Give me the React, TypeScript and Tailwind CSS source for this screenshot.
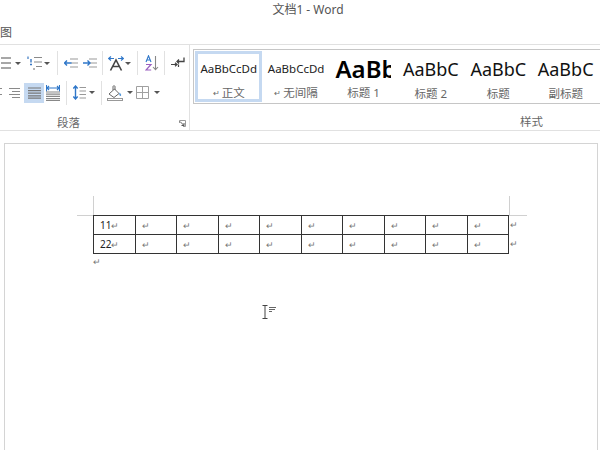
const FONT = "font-['Noto_Sans','Noto_Sans_CJK_SC',sans-serif]";

function Caret() {
  return <div className="w-0 h-0 border-x-[3px] border-x-transparent border-t-[3px] border-t-[#555]" />;
}

function Sep() {
  return <div className="w-px h-[24px] bg-[#e1e1e1]" />;
}

function Lines({ w = 14 }: { w?: number }) {
  return (
    <svg width={w} height="12" viewBox={`0 0 ${w} 12`}>
      <path d={`M0 1.5H${w}M3 4.5H${w}M0 7.5H${w}M3 10.5H${w}`} stroke="#8a8a8a" strokeWidth="1.1" />
    </svg>
  );
}

function ListIcon() {
  return (
    <svg width="14" height="14" viewBox="0 0 14 14">
      <path d="M2 2H12M2 7H12M2 12H12" stroke="#8a8a8a" strokeWidth="1.3" />
    </svg>
  );
}

function MultiList() {
  return (
    <svg width="15" height="14" viewBox="0 0 15 14">
      <path d="M1 0.5V3" stroke="#3a78c2" strokeWidth="1.2" />
      <path d="M4 3V6.5M3 8.5H5" stroke="#3a78c2" strokeWidth="1.4" />
      <path d="M7 1.5H15M7 6H15M9 10.5H15" stroke="#8a8a8a" strokeWidth="1.1" />
      <path d="M7 12V14" stroke="#6a6a6a" strokeWidth="1" />
    </svg>
  );
}

function IndentIcon({ flip = false }: { flip?: boolean }) {
  return (
    <svg width="14" height="10" viewBox="0 0 14 10">
      <path d="M6 1H14M7 5H14M6 9H14" stroke="#999" strokeWidth="1.2" />
      {flip ? (
        <path d="M0 5H7M4.5 2.5L7 5L4.5 7.5" stroke="#2f77c9" strokeWidth="1.4" fill="none" />
      ) : (
        <path d="M0.5 5H7.5M3 2.5L0.5 5L3 7.5" stroke="#2f77c9" strokeWidth="1.4" fill="none" />
      )}
    </svg>
  );
}

function SpacingIcon() {
  return (
    <svg width="16" height="15" viewBox="0 0 16 15">
      <path d="M0.5 2.5H6M3 0.5L0.5 2.5L3 4.5M15.5 2.5H10M13 0.5L15.5 2.5L13 4.5" stroke="#2f77c9" strokeWidth="1.2" fill="none" />
      <path d="M2.5 14.5L8 4L13.5 14.5M5 10.5H11" stroke="#444" strokeWidth="1.6" fill="none" />
    </svg>
  );
}

function SortIcon() {
  return (
    <svg width="14" height="16" viewBox="0 0 14 16">
      <path d="M1 7L3.5 0.8L6 7M2 5H5" stroke="#2f77c9" strokeWidth="1.1" fill="none" />
      <path d="M1 9.5H6L1 15H6.2" stroke="#9a5fc0" strokeWidth="1.2" fill="none" />
      <path d="M10.5 1V14.5M8 12L10.5 14.7L13 12" stroke="#888" strokeWidth="1.1" fill="none" />
    </svg>
  );
}

function MarkIcon() {
  return (
    <svg width="14" height="12" viewBox="0 0 14 12">
      <path d="M13 0.5V4.5H6M8 2.5L6 4.5L8 6.5" stroke="#444" strokeWidth="1.3" fill="none" />
      <path d="M0 7.5H6M4 5.8L6 7.5L4 9.2M7.5 7.5V10" stroke="#444" strokeWidth="1.2" fill="none" />
    </svg>
  );
}

function Justify() {
  return (
    <svg width="13" height="12" viewBox="0 0 13 12">
      <path d="M0 1H13M0 3.6H13M0 6.2H13M0 8.8H13M0 11.2H13" stroke="#777" strokeWidth="1.2" />
    </svg>
  );
}

function Distributed() {
  return (
    <svg width="14" height="16" viewBox="0 0 14 16">
      <path d="M0.5 0V6.5M13.5 0V6.5M1 3H13M3 1L1 3L3 5M11 1L13 3L11 5" stroke="#2f77c9" strokeWidth="1.1" fill="none" />
      <path d="M0 7H14M0 9.2H14M0 11.4H14M0 13.6H14M0 15.5H14" stroke="#888" strokeWidth="1.2" />
    </svg>
  );
}

function LineSpacing() {
  return (
    <svg width="13" height="15" viewBox="0 0 13 15">
      <path d="M2.5 1V14M0.3 3.5L2.5 1L4.7 3.5M0.3 11.5L2.5 14L4.7 11.5" stroke="#2f77c9" strokeWidth="1.4" fill="none" />
      <path d="M6.5 2.5H13M6.5 6H13M6.5 9.5H13M6.5 13H13" stroke="#999" strokeWidth="1.1" />
    </svg>
  );
}

function Shading() {
  return (
    <svg width="16" height="16" viewBox="0 0 16 16">
      <path d="M2 9L7.5 4L12 8.5L7 12.5Z" fill="#fff" stroke="#666" strokeWidth="1" />
      <path d="M6 5V1.5C6 0.5 8 0.5 8 1.5V5" stroke="#666" strokeWidth="1" fill="none" />
      <path d="M12.5 7.5C14.5 9 14.5 11 13.5 11C12.5 11 12 9.5 12.5 7.5Z" fill="#4d94d8" />
      <rect x="0.5" y="13.5" width="15" height="2" fill="#fff" stroke="#999" />
    </svg>
  );
}

function Borders() {
  return (
    <svg width="13" height="13" viewBox="0 0 13 13">
      <path d="M0.5 0.5H12.5V12.5H0.5ZM6.5 0.5V12.5M0.5 6.5H12.5" stroke="#a0a0a0" fill="none" />
    </svg>
  );
}

function Launcher() {
  return (
    <svg width="7" height="7" viewBox="0 0 7 7">
      <path d="M0.5 3V0.5H6.5V6.5H4" stroke="#999" fill="none" />
      <path d="M1 1.5L5 5.5M5 3V5.5H2.5" stroke="#555" fill="none" />
    </svg>
  );
}

function ParagraphGroup() {
  return (
    <div className="w-[190px] shrink-0 border-r border-[#e1e1e1] h-full flex flex-col">
      <div className="h-[35px] mt-[2px] flex items-center">
        <div className="ml-[-1px] w-[14px]"><ListIcon /></div>
        <div className="ml-[2px]"><Caret /></div>
        <div className="ml-[6px]"><MultiList /></div>
        <div className="ml-[2px]"><Caret /></div>
        <div className="ml-[7px]"><Sep /></div>
        <div className="ml-[6px]"><IndentIcon /></div>
        <div className="ml-[5px]"><IndentIcon flip /></div>
        <div className="ml-[5px]"><Sep /></div>
        <div className="ml-[5px]"><SpacingIcon /></div>
        <div className="ml-[1px]"><Caret /></div>
        <div className="ml-[6px]"><Sep /></div>
        <div className="ml-[7px]"><SortIcon /></div>
        <div className="ml-[5px]"><Sep /></div>
        <div className="ml-[6px]"><MarkIcon /></div>
      </div>
      <div className="h-[24px] mt-[1px] flex items-center">
        <div className="w-[2px] overflow-hidden"><Lines w={2} /></div>
        <div className="ml-[7px]"><Lines w={11} /></div>
        <div className="ml-[4px] w-[20px] h-[20px] bg-[#c5d9f1] flex items-center justify-center"><Justify /></div>
        <div className="ml-[2px]"><Distributed /></div>
        <div className="ml-[6px]"><Sep /></div>
        <div className="ml-[6px]"><LineSpacing /></div>
        <div className="ml-[3px]"><Caret /></div>
        <div className="ml-[6px]"><Sep /></div>
        <div className="ml-[5px]"><Shading /></div>
        <div className="ml-[4px]"><Caret /></div>
        <div className="ml-[3px]"><Borders /></div>
        <div className="ml-[5px]"><Caret /></div>
      </div>
      <div className="mt-[10px] h-[16px] flex items-center relative pl-[57px] text-[11.5px] leading-none text-[#666]">
        段落
        <div className="absolute left-[179px] top-[5px]"><Launcher /></div>
      </div>
    </div>
  );
}

const styles = [
  { preview: 'AaBbCcDd', caption: '正文', mark: true, size: 'text-[11.5px]', color: 'text-[#222]' },
  { preview: 'AaBbCcDd', caption: '无间隔', mark: true, size: 'text-[11.5px]', color: 'text-[#222]' },
  { preview: 'AaBb', caption: '标题 1', mark: false, size: 'text-[24px] font-semibold w-[56px] overflow-hidden', color: 'text-black' },
  { preview: 'AaBbC', caption: '标题 2', mark: false, size: 'text-[18px]', color: 'text-[#111]' },
  { preview: 'AaBbC', caption: '标题', mark: false, size: 'text-[18px]', color: 'text-[#111]' },
  { preview: 'AaBbC', caption: '副标题', mark: false, size: 'text-[18px]', color: 'text-[#111]' },
];

function StylesGroup() {
  return (
    <div className="flex-1 min-w-0 flex flex-col pl-[3px]">
      <div className="h-[57px] mt-[4px] border border-r-0 border-[#c6c6c6] flex p-[1px] overflow-hidden">
        {styles.map((s, i) => (
          <div
            key={i}
            className={`w-[67.4px] shrink-0 flex flex-col items-center overflow-hidden border-[3px] ${i === 0 ? 'border-[#c5d9f1]' : 'border-transparent'}`}
          >
            <div className={`h-[28px] mt-[2px] flex items-center whitespace-nowrap ${s.size} ${s.color}`}>{s.preview}</div>
            <div className="h-[14px] mt-[5px] flex items-center text-[11.5px] leading-none text-[#666] whitespace-nowrap">
              {s.mark && <span className="text-[8px] mr-[2px]">↵</span>}
              {s.caption}
            </div>
          </div>
        ))}
      </div>
      <div className="mt-[10px] h-[16px] flex items-center pl-[327px] text-[11.5px] leading-none text-[#666]">样式</div>
    </div>
  );
}

function Mark() {
  return <span className="block text-[9px] leading-none text-[#777]">↵</span>;
}

function DocTable() {
  const rows = ['11', '22'];
  const cols = [0, 1, 2, 3, 4, 5, 6, 7, 8, 9];
  return (
    <div className="relative w-[416px]">
      <div className="grid grid-cols-10 border-t border-l border-[#333]">
        {rows.map((r) =>
          cols.map((c) => (
            <div key={r + c} className="h-[19px] border-r border-b border-[#333] pl-[6px] flex items-center text-[10px] text-[#222]">
              {c === 0 ? r : ''}
              <Mark />
            </div>
          ))
        )}
      </div>
      <div className="absolute left-[417px] top-[5px]"><Mark /></div>
      <div className="absolute left-[417px] top-[24px]"><Mark /></div>
      {/* 裁剪标记 */}
      <div className="absolute left-0 top-[-19px] w-px h-[19px] bg-[#d0d0d0]" />
      <div className="absolute left-[-16px] top-0 w-[16px] h-px bg-[#d0d0d0]" />
      <div className="absolute left-[416px] top-[-19px] w-px h-[19px] bg-[#d0d0d0]" />
      <div className="absolute left-[416px] top-0 w-[18px] h-px bg-[#d0d0d0]" />
      <div className="mt-[3px]"><Mark /></div>
    </div>
  );
}

export default function App() {
  return (
    <div className={`relative w-[600px] h-[450px] overflow-hidden bg-white flex flex-col ${FONT}`}>
      <div className="h-[21px] pt-[3px] pl-[16px] text-center text-[12px] leading-[14px] text-[#555]">文档1 - Word</div>
      <div className="h-[23px] flex items-center text-[12px] leading-none text-[#555] pt-[1px]">图</div>
      <div className="h-[87px] border-y border-[#e1e1e1] flex">
        <ParagraphGroup />
        <StylesGroup />
      </div>
      <div className="flex-1 pl-[4px] pr-[2px] pt-[12px]">
        <div className="h-full border border-b-0 border-[#d4d4d4] pl-[88px] pt-[71px]">
          <DocTable />
          <div className="absolute left-[262px] top-[305px] flex items-start">
            <svg width="6" height="14" viewBox="0 0 6 14">
              <path d="M0.5 0.5H5.5M3 0.5V13M0.5 13.5H5.5" stroke="#444" fill="none" />
            </svg>
            <svg className="ml-[1px] mt-[2px]" width="7" height="6" viewBox="0 0 7 6">
              <path d="M0 0.5H7M0 2.5H6M0 4.5H3" stroke="#666" fill="none" />
            </svg>
          </div>
        </div>
      </div>
    </div>
  );
}
